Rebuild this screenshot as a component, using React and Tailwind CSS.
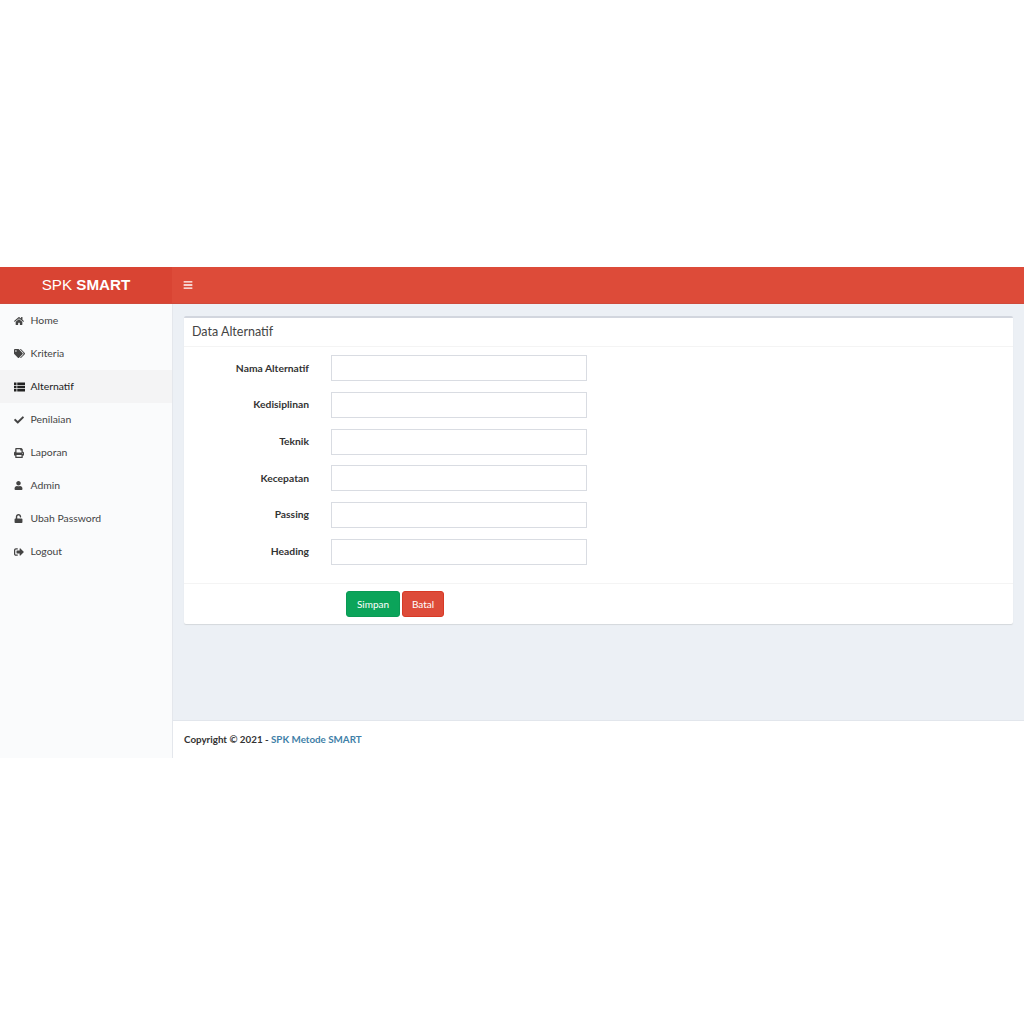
import React from "react";
import { FaHome, FaTags, FaCheck, FaPrint, FaUser, FaUnlock, FaSignOutAlt, FaBars } from "react-icons/fa";

// FA4 th-list, the package's FaList has round bullets
const ThList = () => (
  <svg width="11" height="10" viewBox="0 0 11 10" fill="currentColor">
    <rect x="0" y="0.5" width="2.5" height="2.5" />
    <rect x="0" y="3.75" width="2.5" height="2.5" />
    <rect x="0" y="7" width="2.5" height="2.5" />
    <rect x="3.25" y="0.5" width="7.75" height="2.5" />
    <rect x="3.25" y="3.75" width="7.75" height="2.5" />
    <rect x="3.25" y="7" width="7.75" height="2.5" />
  </svg>
);

const menu = [
  { label: "Home", icon: <FaHome size={10} /> },
  { label: "Kriteria", icon: <FaTags size={11} /> },
  { label: "Alternatif", icon: <ThList />, active: true },
  { label: "Penilaian", icon: <FaCheck size={10} /> },
  { label: "Laporan", icon: <FaPrint size={10} /> },
  { label: "Admin", icon: <FaUser size={9} /> },
  { label: "Ubah Password", icon: <FaUnlock size={9} /> },
  { label: "Logout", icon: <FaSignOutAlt size={10} /> },
];

const fields = ["Nama Alternatif", "Kedisiplinan", "Teknik", "Kecepatan", "Passing", "Heading"];

const App = () => {
  return (
    <div className="min-h-[1024px] bg-white pt-[267px] font-['Lato',sans-serif] text-[10.4px] text-[#333]">
      <div className="flex h-[37px] border-b border-[#cf4a3b] bg-[#dd4b39]">
        <div className="flex w-[172px] items-center justify-center bg-[#d94433] font-['Liberation_Sans',sans-serif] text-[15.2px] text-white">
          <span>SPK&nbsp;</span>
          <b>SMART</b>
        </div>
        <div className="flex items-center pl-[11px] text-white">
          <FaBars size={10} />
        </div>
      </div>

      <div className="flex h-[454px]">
        <div className="w-[173px] shrink-0 border-r border-[#e4e7ec] bg-[#fafbfc]">
          {menu.map((item) => (
            <div
              key={item.label}
              className={`flex h-[33px] items-center pl-[14px] ${
                item.active ? "bg-[#f4f4f5] text-[#222]" : "text-[#444]"
              }`}
            >
              <span className="flex w-[16.5px] shrink-0">{item.icon}</span>
              <span>{item.label}</span>
            </div>
          ))}
        </div>

        <div className="flex flex-1 flex-col">
          <div className="flex-1 bg-[#ecf0f5] px-[11px] pt-[12px]">
            <div className="h-[308px] rounded-[2px] border-t-[2px] border-[#d2d6de] bg-white shadow-[0_1px_1px_rgba(0,0,0,0.1)]">
              <div className="flex h-[29px] items-center border-b border-[#f4f4f4] pl-[8px] text-[12.5px] text-[#444]">
                Data Alternatif
              </div>
              <div className="flex h-[237px] flex-col gap-[10.7px] border-b border-[#f4f4f4] pt-[8.3px]">
                {fields.map((f) => (
                  <div key={f} className="flex h-[26px] items-center">
                    <label className="w-[125px] text-right text-[10.3px] font-bold">{f}</label>
                    <input className="ml-[22px] h-[26px] w-[256px] border border-[#d9dce2] bg-white" />
                  </div>
                ))}
              </div>
              <div className="flex gap-[2px] pl-[162px] pt-[7px]">
                <button className="h-[26px] w-[54px] rounded-[3px] border border-[#0a9a55] bg-[#0ba45a] text-[10px] text-white">
                  Simpan
                </button>
                <button className="h-[26px] w-[42px] rounded-[3px] border border-[#d73925] bg-[#dd4b39] text-[10px] text-white">
                  Batal
                </button>
              </div>
            </div>
          </div>
          <div className="flex h-[38px] items-center border-t border-[#e2e6ec] bg-white pl-[11px] text-[9.8px] font-bold">
            <span>Copyright © 2021 -&nbsp;</span>
            <span className="text-[#3f7fa8]">SPK Metode SMART</span>
          </div>
        </div>
      </div>
    </div>
  );
};

export default App;
